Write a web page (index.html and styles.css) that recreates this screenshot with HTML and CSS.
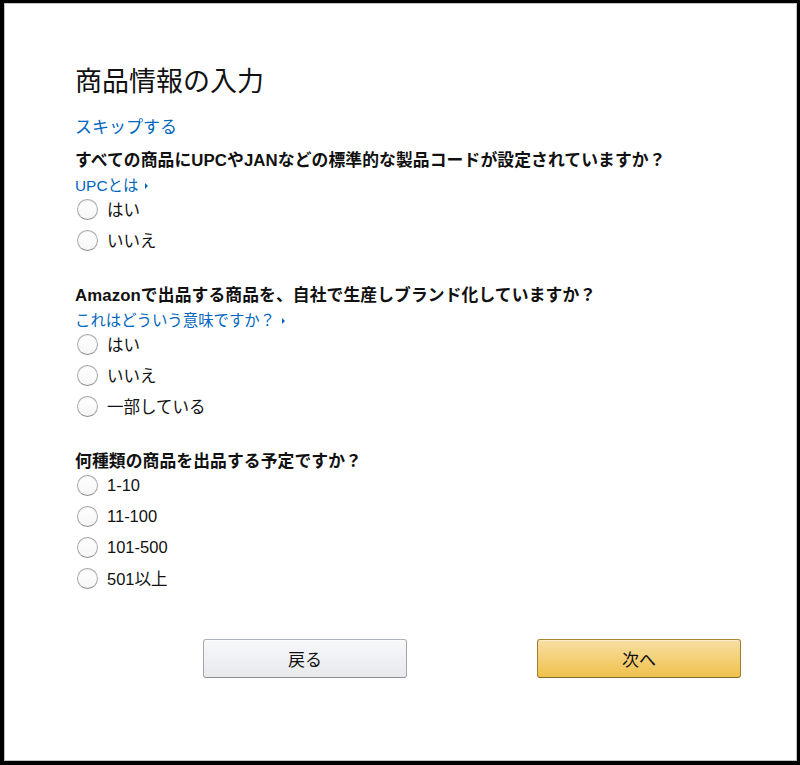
FILE: index.html
```html
<!DOCTYPE html>
<html lang="ja">
<head>
<meta charset="utf-8">
<title>商品情報の入力</title>
<link rel="stylesheet" href="styles.css">
</head>
<body>
<div class="frame">
  <h1 class="title">商品情報の入力</h1>
  <a class="skip" href="#">スキップする</a>

  <section class="question">
    <h2 class="q-head">すべての商品にUPCやJANなどの標準的な製品コードが設定されていますか？</h2>
    <a class="help" href="#">UPCとは<span class="caret"></span></a>
    <label class="option"><input class="radio" type="radio" name="q1"><span>はい</span></label>
    <label class="option"><input class="radio" type="radio" name="q1"><span>いいえ</span></label>
  </section>

  <section class="question">
    <h2 class="q-head">Amazonで出品する商品を、自社で生産しブランド化していますか？</h2>
    <a class="help" href="#">これはどういう意味ですか？<span class="caret"></span></a>
    <label class="option"><input class="radio" type="radio" name="q2"><span>はい</span></label>
    <label class="option"><input class="radio" type="radio" name="q2"><span>いいえ</span></label>
    <label class="option"><input class="radio" type="radio" name="q2"><span>一部している</span></label>
  </section>

  <section class="question">
    <h2 class="q-head">何種類の商品を出品する予定ですか？</h2>
    <label class="option"><input class="radio" type="radio" name="q3"><span>1-10</span></label>
    <label class="option"><input class="radio" type="radio" name="q3"><span>11-100</span></label>
    <label class="option"><input class="radio" type="radio" name="q3"><span>101-500</span></label>
    <label class="option"><input class="radio" type="radio" name="q3"><span>501以上</span></label>
  </section>

  <div class="actions">
    <button class="btn btn-back" type="button">戻る</button>
    <button class="btn btn-next" type="button">次へ</button>
  </div>
</div>
</body>
</html>
```

FILE: styles.css
```css
html, body {
  margin: 0;
  padding: 0;
  background: #000;
}

body {
  font-family: "Liberation Sans", Arial, "Noto Sans CJK JP", sans-serif;
  color: #111;
}

.frame {
  box-sizing: border-box;
  margin: 3px 3px 0 4px;
  height: 758px;
  background: #fff;
  border: 1px solid #c4c4c4;
  padding: 62px 0 0 70px;
  display: flex;
  flex-direction: column;
  align-items: flex-start;
}

.title {
  margin: 0;
  font-size: 27px;
  line-height: 32px;
  font-weight: 400;
  color: #111;
}

.skip {
  margin-top: 18px;
  font-size: 17px;
  line-height: 24px;
  color: #0066c0;
  text-decoration: none;
}

.question {
  display: flex;
  flex-direction: column;
  align-items: flex-start;
  margin-top: 10px;
}

.question + .question {
  margin-top: 33px;
}

.q-head {
  margin: 0;
  font-size: 16.8px;
  line-height: 22px;
  font-weight: 700;
  color: #111;
  letter-spacing: 0.1px;
}

.help {
  margin-top: 6px;
  margin-bottom: 3px;
  font-size: 15.4px;
  line-height: 16px;
  color: #0066c0;
  text-decoration: none;
  display: flex;
  align-items: center;
}

.caret {
  display: inline-block;
  width: 0;
  height: 0;
  margin-left: 7px;
  border-left: 3px solid #0066c0;
  border-top: 3px solid transparent;
  border-bottom: 3px solid transparent;
}

.option {
  display: flex;
  align-items: center;
  height: 24px;
  margin-top: 7px;
  font-size: 16.5px;
  color: #111;
}

.q-head + .option {
  margin-top: 0;
}

.help + .option {
  margin-top: 0;
}

.radio {
  -webkit-appearance: none;
  appearance: none;
  box-sizing: border-box;
  width: 21px;
  height: 21px;
  margin: 0 9px 0 2px;
  border-radius: 50%;
  border: 1px solid #a9a9a9;
  border-bottom-color: #8f8f8f;
  background: linear-gradient(#ffffff, #f6f6f6);
  box-shadow: inset 0 1px 1px rgba(0, 0, 0, 0.06);
}

.actions {
  display: flex;
  gap: 130px;
  margin-top: 49px;
  padding-left: 128px;
}

.btn {
  box-sizing: border-box;
  width: 204px;
  height: 39px;
  border-radius: 3px;
  font-family: "Liberation Sans", Arial, "Noto Sans CJK JP", sans-serif;
  font-size: 17px;
  color: #111;
  cursor: pointer;
}

.btn-back {
  background: linear-gradient(#f7f8fa, #e7e9ec);
  border: 1px solid #adb1b8;
  border-color: #adb1b8 #a2a6ac #8d9096;
  box-shadow: inset 0 1px 0 rgba(255, 255, 255, 0.6);
}

.btn-next {
  background: linear-gradient(#f7dfa5, #f0c14b);
  border: 1px solid #a88734;
  border-color: #a88734 #9c7e31 #846a29;
  box-shadow: inset 0 1px 0 rgba(255, 255, 255, 0.4);
}
```
